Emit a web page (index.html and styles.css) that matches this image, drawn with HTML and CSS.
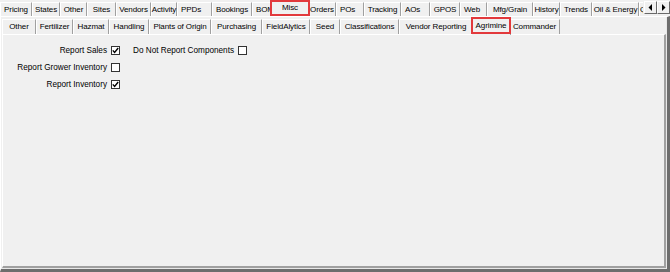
FILE: index.html
```html
<!DOCTYPE html>
<html>
<head>
    <meta charset="utf-8">
    <title>Misc - Agrimine</title>
    <link rel="stylesheet" href="styles.css">
</head>
<body>
    <div class="window">
        <div class="strip outer-strip">
            <span class="tab w32">Pricing</span>
            <span class="tab w28">States</span>
            <span class="tab w27">Other</span>
            <span class="tab w29">Sites</span>
            <span class="tab w35">Vendors</span>
            <span class="tab w26">Activity</span>
            <span class="tab w35 left">PPDs</span>
            <span class="tab w40">Bookings</span>
            <span class="tab w20 left">BOM</span>
            <span class="tab w40 selected">Misc</span>
            <span class="tab w28">Orders</span>
            <span class="tab w28 left">POs</span>
            <span class="tab w37">Tracking</span>
            <span class="tab w29 left">AOs</span>
            <span class="tab w30">GPOS</span>
            <span class="tab w27 left">Web</span>
            <span class="tab w46">Mfg/Grain</span>
            <span class="tab w27">History</span>
            <span class="tab w32">Trends</span>
            <span class="tab w47">Oil &amp; Energy</span>
            <span class="tab w40 left tight">Quality</span>

            <!-- scroll buttons sit over the clipped tabs -->
            <div class="scroller">
                <span class="scroll-btn">
                    <svg width="5" height="7" viewBox="0 0 5 7"><polygon points="4,0 4,7 0.5,3.5" fill="#000"/></svg>
                </span>
                <span class="scroll-btn">
                    <svg width="5" height="7" viewBox="0 0 5 7"><polygon points="1,0 1,7 4.5,3.5" fill="#000"/></svg>
                </span>
            </div>
        </div>

        <div class="outer-page">
            <div class="strip inner-strip">
                <span class="tab w34">Other</span>
                <span class="tab w37">Fertilizer</span>
                <span class="tab w36">Hazmat</span>
                <span class="tab w40">Handling</span>
                <span class="tab w62">Plants of Origin</span>
                <span class="tab w51">Purchasing</span>
                <span class="tab w48">FieldAlytics</span>
                <span class="tab w30">Seed</span>
                <span class="tab w59">Classifications</span>
                <span class="tab w74">Vendor Reporting</span>
                <span class="tab w40 selected">Agrimine</span>
                <span class="tab w51">Commander</span>
            </div>

            <div class="inner-page">
                <div class="fields">
                    <span class="label">Report Sales</span>
                    <span class="check">
                        <svg width="7" height="7" viewBox="0 0 7 7"><polyline points="0.8,3.4 2.6,5.4 6.2,1" fill="none" stroke="#000" stroke-width="1.4"/></svg>
                    </span>
                    <span class="spacer"></span>
                    <span class="label">Do Not Report Components</span>
                    <span class="check"></span>

                    <span class="label">Report Grower Inventory</span>
                    <span class="check"></span>
                    <span class="spacer"></span>
                    <span></span>
                    <span></span>

                    <span class="label">Report Inventory</span>
                    <span class="check">
                        <svg width="7" height="7" viewBox="0 0 7 7"><polyline points="0.8,3.4 2.6,5.4 6.2,1" fill="none" stroke="#000" stroke-width="1.4"/></svg>
                    </span>
                </div>
            </div>
        </div>
    </div>
</body>
</html>
```

FILE: styles.css
```css
body {
    margin: 0;
    background: #f0f0f0;
    font-family: "Liberation Sans", Arial, sans-serif;
    font-size: 8.2px;
    color: #000;
}
.window {
    width: 670px;
    height: 272px;
    display: flex;
    flex-direction: column;
    overflow: hidden;
}

/* tab strips */
.strip {
    display: flex;
    align-items: flex-end;
    position: relative;
    white-space: nowrap;
    flex-shrink: 0;
}
.outer-strip {
    height: 16px;
    overflow: hidden;
}
.inner-strip {
    height: 17px;
}
.tab {
    box-sizing: border-box;
    height: 14px;
    padding-bottom: 1px;
    display: flex;
    align-items: center;
    justify-content: center;
    border-left: 1px solid #fff;
    border-top: 1px solid #fff;
    border-right: 1px solid #a0a0a0;
    background: #f0f0f0;
    font-size: 8px;
    letter-spacing: -0.1px;
    flex-shrink: 0;
}
.tab.left {
    justify-content: flex-start;
    padding-left: 3px;
}
.tab.tight {
    padding-left: 0;
}
.inner-strip .tab {
    height: 15px;
}
.tab.selected {
    position: relative;
    z-index: 1;
    height: 17px;
    margin: 0 -2px -1px;
    padding-bottom: 3px;
}
.inner-strip .tab.selected {
    height: 18px;
}
.tab.selected::after {
    content: "";
    position: absolute;
    left: -1px;
    right: -1px;
    top: -1px;
    bottom: 1px;
    border: 2px solid #e2393c;
}
.w20 { width: 20px; }
.w26 { width: 26px; }
.w27 { width: 27px; }
.w28 { width: 28px; }
.w29 { width: 29px; }
.w30 { width: 30px; }
.w32 { width: 32px; }
.w34 { width: 34px; }
.w35 { width: 35px; }
.w36 { width: 36px; }
.w37 { width: 37px; }
.w40 { width: 40px; }
.w46 { width: 46px; }
.w47 { width: 47px; }
.w48 { width: 48px; }
.w51 { width: 51px; }
.w59 { width: 59px; }
.w62 { width: 62px; }
.w74 { width: 74px; }

.scroller {
    position: absolute;
    right: 0;
    top: 1px;
    display: flex;
    background: #f0f0f0;
    padding-left: 1px;
}
.scroll-btn {
    box-sizing: border-box;
    width: 13px;
    height: 13px;
    display: flex;
    align-items: center;
    justify-content: center;
    border-top: 1px solid #fff;
    border-left: 1px solid #fff;
    border-right: 1px solid #696969;
    border-bottom: 1px solid #696969;
    background: #f0f0f0;
}

/* pages */
.outer-page {
    flex: 1;
    display: flex;
    flex-direction: column;
    border-top: 1px solid #fff;
    border-left: 1px solid #fff;
    border-right: 3px solid #6d6d6d;
    border-bottom: 3px solid #6d6d6d;
    padding: 0 1px 1px 1px;
    box-shadow: inset -1px -1px 0 #e8e8e8;
}
.inner-page {
    flex: 1;
    border-top: 1px solid #fff;
    border-left: 1px solid #fff;
    border-right: 2px solid #a0a0a0;
    border-bottom: 2px solid #a0a0a0;
}

/* checkbox fields */
.fields {
    display: grid;
    grid-template-columns: 104px 9px 5px auto 9px;
    grid-auto-rows: 17px;
    column-gap: 4px;
    justify-content: start;
    align-items: center;
    padding-top: 7px;
}
.label {
    justify-self: end;
    white-space: nowrap;
}
.check {
    box-sizing: border-box;
    width: 9px;
    height: 9px;
    border: 1px solid #333;
    background: #fff;
    display: flex;
    align-items: center;
    justify-content: center;
}
```
